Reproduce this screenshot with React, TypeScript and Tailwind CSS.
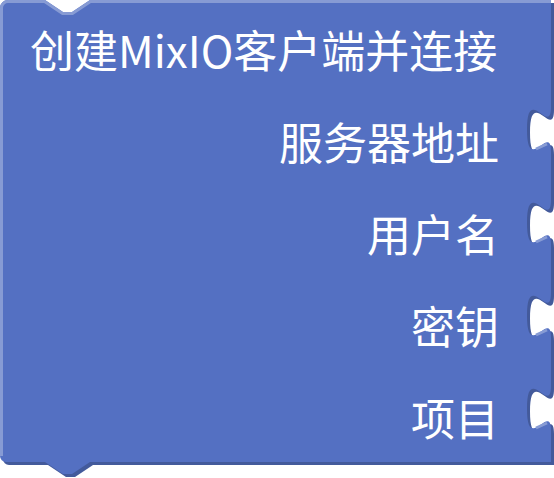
import React from 'react';

// Block geometry (px): right edge, bottom edge and the top of each value-input tab
const R = 551;
const B = 462;
const TABS = [107, 200, 293, 386];

const FILL = '#5470c2';
const LIGHT = '#879bd4';
const DARK = '#435a9b';

const tab = (y: number) => `V ${y} c 0,30 -24,-24 -24,22.5 s 24,-7.5 24,22.5`;

const outline = [
  'M 0,8 A 8,8 0 0 1 8,0',
  'H 45 l 18,12 h 9 l 18,-12',
  `H ${R}`,
  ...TABS.map(tab),
  `V ${B}`,
  'H 90 l -18,12 h -9 l -18,-12',
  `H 6 A 6,6 0 0 1 0,${B - 6} Z`,
].join(' ');

const topLeftEdge = `M 0,${B - 6} V 8 A 8,8 0 0 1 8,0 H 45 l 18,12 h 9 l 18,-12 H ${R}`;

const inputs = ['服务器地址', '用户名', '密钥', '项目'];

const BlockShape: React.FC = () => (
  <svg className="absolute inset-0" width={554} height={478} viewBox="0 0 554 478">
    <defs>
      <clipPath id="block-clip">
        <path d={outline} />
      </clipPath>
    </defs>
    <path d={outline} fill={DARK} transform="translate(3,3)" />
    <path d={outline} fill={FILL} />
    <g clipPath="url(#block-clip)" fill="none" stroke={LIGHT} strokeWidth={6}>
      <path d={topLeftEdge} />
    </g>
    {TABS.map((y) => (
      <line key={y} x1={R - 15} y1={y + 42} x2={R - 4} y2={y + 37} stroke={LIGHT} strokeWidth={3} />
    ))}
  </svg>
);

const App: React.FC = () => {
  return (
    <div className="relative w-[554px] h-[478px] bg-white overflow-hidden">
      <BlockShape />
      <div className="relative flex flex-col pt-[3px] pl-[30px] pr-[55px] font-['Noto_Sans_CJK_SC',sans-serif] text-[44px] leading-[44px] text-white whitespace-nowrap">
        <div className="h-[92px] flex items-center">创建MixIO客户端并连接</div>
        {inputs.map((label) => (
          <div key={label} className="h-[92px] flex items-center justify-end">
            {label}
          </div>
        ))}
      </div>
    </div>
  );
};

export default App;
